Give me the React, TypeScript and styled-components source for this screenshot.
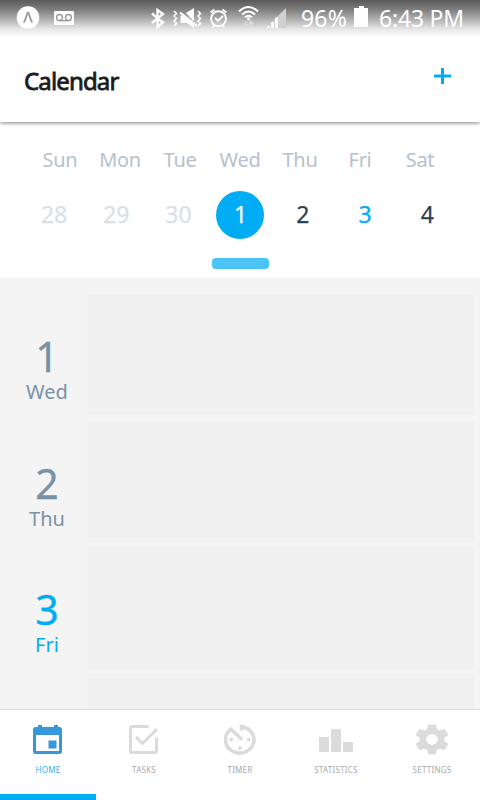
import React from "react";
import styled, { createGlobalStyle } from "styled-components";

const Global = createGlobalStyle`
  * { box-sizing: border-box; }
  html, body { margin: 0; padding: 0; overflow: hidden; background: #fff; }
  body { font-family: "Noto Sans", "Open Sans", sans-serif; }
`;

const Screen = styled.div`
  width: 480px;
  height: 800px;
  display: flex;
  flex-direction: column;
  overflow: hidden;
  background: #f4f4f4;
`;

const Header = styled.header`
  height: 122px;
  flex: none;
  background: #fff;
  box-shadow: 0 1px 4px rgba(0, 0, 0, 0.5);
  z-index: 1;
`;

const StatusBar = styled.div`
  height: 38px;
  display: flex;
  background: linear-gradient(#5a5a5a 0px, #808080 10px, #b4b4b4 20px, #e6e6e6 29px, #fff 37px);
`;

const StatusIcons = styled.svg`
  width: 301px;
  height: 38px;
  flex: none;
`;

const StatusText = styled.span<{ $width: number; $spacing: number }>`
  width: ${(p) => p.$width}px;
  font-size: 23px;
  line-height: 37px;
  letter-spacing: ${(p) => p.$spacing}px;
  color: #fff;
  white-space: nowrap;
`;

const Battery = styled.svg`
  width: 14px;
  height: 38px;
  margin-right: 11px;
  flex: none;
`;

const TitleRow = styled.div`
  height: 84px;
  display: flex;
  justify-content: space-between;
  padding: 0 29px 0 24px;
`;

const Title = styled.h1`
  margin: 0;
  padding-top: 25px;
  font-size: 24px;
  line-height: 36px;
  font-weight: 400;
  letter-spacing: -0.85px;
  color: #1b1b1b;
  -webkit-text-stroke: 0.8px #1b1b1b;
`;

const AddButton = styled.button`
  width: 17px;
  height: 17px;
  margin: 30px 0 0;
  padding: 0;
  border: 0;
  background: none;
  svg { display: block; }
`;

const WeekPanel = styled.section`
  height: 156px;
  flex: none;
  background: #fff;
  display: flex;
  flex-direction: column;
`;

const WeekDays = styled.div`
  display: grid;
  grid-template-columns: repeat(7, 60px);
  padding: 24px 30px 0;
`;

const WeekDay = styled.span`
  font-size: 20px;
  line-height: 28px;
  letter-spacing: -0.3px;
  text-align: center;
  color: #b6c1cd;
`;

const Dates = styled.div`
  display: grid;
  grid-template-columns: repeat(7, 62.2px);
  padding: 17px 22.5px 0;
  justify-items: center;
`;

const DateCell = styled.span<{ $color: string; $selected?: boolean }>`
  width: 48px;
  height: 48px;
  border-radius: 24px;
  background: ${(p) => (p.$selected ? "#00adf5" : "transparent")};
  color: ${(p) => p.$color};
  font-size: 23px;
  line-height: 47px;
  text-align: center;
  text-indent: 1px;
  -webkit-text-stroke: 0.25px ${(p) => p.$color};
`;

const Knob = styled.div`
  width: 57px;
  height: 11px;
  margin: 19px 0 0 212px;
  border-radius: 4px;
  background: #4ac4f7;
`;

const Agenda = styled.main`
  height: 431px;
  flex: none;
  overflow: hidden;
  display: flex;
  flex-direction: column;
  gap: 5.33px;
  padding-top: 16px;
`;

const AgendaRow = styled.div`
  height: 121.33px;
  flex: none;
  display: grid;
  grid-template-columns: 88px 386px;
`;

const AgendaDay = styled.div<{ $today?: boolean }>`
  display: flex;
  flex-direction: column;
  align-items: center;
  padding: 36px 0 0 6px;
  color: ${(p) => (p.$today ? "#00adf5" : "#7a92a5")};
`;

const DayNumber = styled.span`
  font-size: 41px;
  line-height: 52px;
  -webkit-text-stroke: 0.35px currentColor;
`;

const DayName = styled.span`
  font-size: 20px;
  line-height: 20px;
`;

const Slot = styled.div`
  background: #f0f0f0;
`;

const TabBar = styled.nav`
  height: 91px;
  flex: none;
  display: grid;
  grid-template-columns: repeat(5, 96px);
  background: #fff;
  border-top: 1px solid #dedede;
`;

const Tab = styled.div<{ $active?: boolean }>`
  display: flex;
  flex-direction: column;
  align-items: center;
  padding-top: 12px;
  color: ${(p) => (p.$active ? "#3498db" : "#dbdbdb")};
  border-bottom: 6px solid ${(p) => (p.$active ? "#00adf5" : "transparent")};
`;

const TabIcon = styled.svg`
  width: 36px;
  height: 36px;
`;

const TabLabel = styled.span<{ $active?: boolean }>`
  margin-top: 6px;
  font-size: 8px;
  line-height: 12px;
  letter-spacing: 0.25px;
  color: ${(p) => (p.$active ? "#1eb1f3" : "#a9a9a9")};
`;

const weekDays = ["Sun", "Mon", "Tue", "Wed", "Thu", "Fri", "Sat"];

const dates = [
  { day: 28, color: "#d9e1e8" },
  { day: 29, color: "#d9e1e8" },
  { day: 30, color: "#d9e1e8" },
  { day: 1, color: "#ffffff", selected: true },
  { day: 2, color: "#2d4150" },
  { day: 3, color: "#00adf5" },
  { day: 4, color: "#2d4150" },
];

const agenda = [
  { day: "1", name: "Wed" },
  { day: "2", name: "Thu" },
  { day: "3", name: "Fri", today: true },
  { day: "", name: "" },
];

/* Tab drawings share a 36x36 box */
const tabs = [
  {
    label: "HOME",
    active: true,
    icon: (
      <path
        fillRule="evenodd"
        fill="currentColor"
        d="M8 3h4v2h12V3h4v2h1.500a2.500 2.500 0 0 1 2.500 2.500v22a2.500 2.500 0 0 1-2.500 2.500h-24A2.500 2.500 0 0 1 3 29.500v-22A2.500 2.500 0 0 1 5.500 5H8zM6 13v16h23V13zM18.500 18.500h8v8h-8z"
      />
    ),
  },
  {
    label: "TASKS",
    icon: (
      <g fill="none" stroke="currentColor" strokeWidth="3">
        <path d="M22.500 4.500H6A1.500 1.500 0 0 0 4.500 6v23A1.500 1.500 0 0 0 6 30.500h23a1.500 1.500 0 0 0 1.500-1.500V15.500" />
        <path d="M10 15l6.500 6.500L31 7" />
      </g>
    ),
  },
  {
    label: "TIMER",
    icon: (
      <>
        <path
          d="M19.500 8.500V4.600A14.200 13.300 0 1 1 9 7.300L20 17.500"
          fill="none"
          stroke="currentColor"
          strokeWidth="3.600"
        />
        <g fill="currentColor">
          <circle cx="9.200" cy="17.500" r="1.900" />
          <circle cx="26.800" cy="17.500" r="1.900" />
          <circle cx="18" cy="26" r="1.900" />
        </g>
      </>
    ),
  },
  {
    label: "STATISTICS",
    icon: <path fill="currentColor" d="M1 15h10v15H1zM13 7.300h10V30H13zM25 20h10v10H25z" />,
  },
  {
    label: "SETTINGS",
    icon: (
      <path
        fill="currentColor"
        fillRule="evenodd"
        transform="translate(-1.800 -0.600) scale(1.650 1.510)"
        d="M19.430 12.980c.04-.32.07-.64.07-.98s-.03-.66-.07-.98l2.110-1.650c.19-.15.24-.42.12-.64l-2-3.460c-.12-.22-.39-.3-.61-.22l-2.490 1c-.52-.4-1.080-.73-1.690-.98l-.38-2.650C14.460 2.180 14.250 2 14 2h-4c-.25 0-.46.18-.49.420l-.38 2.650c-.61.25-1.170.59-1.690.98l-2.490-1c-.23-.09-.49 0-.61.22l-2 3.460c-.13.22-.07.49.12.64l2.110 1.650c-.04.32-.07.65-.07.98s.03.66.07.98l-2.110 1.650c-.19.15-.24.42-.12.64l2 3.460c.12.22.39.3.61.22l2.490-1c.52.4 1.080.73 1.690.98l.38 2.650c.03.24.24.42.49.42h4c.25 0 .46-.18.49-.42l.38-2.650c.61-.25 1.170-.59 1.690-.98l2.490 1c.23.09.49 0 .61-.22l2-3.460c.12-.22.07-.49-.12-.64l-2.110-1.650zM12 15.500c-1.930 0-3.500-1.570-3.500-3.500s1.570-3.500 3.500-3.500 3.500 1.570 3.500 3.500-1.570 3.500-3.500 3.500z"
      />
    ),
  },
];

export default function App() {
  return (
    <>
      <Global />
      <Screen>
        <Header>
          <StatusBar>
            <StatusIcons viewBox="0 0 301 38" fill="none" stroke="#fff">
              {/* app badge */}
              <circle cx="28" cy="17.500" r="11.300" fill="#fff" stroke="none" />
              <path d="M23.800 22.500c2-3 2.700-7 3.700-9.500h1c1 2.500 1.700 6.500 3.700 9.500" stroke="#999" strokeWidth="1.800" />
              {/* voicemail */}
              <rect x="54" y="11" width="20" height="14" rx="1" fill="#fff" stroke="none" />
              <g stroke="#999" strokeWidth="1.300">
                <circle cx="59.500" cy="17.500" r="3" />
                <circle cx="68.500" cy="17.500" r="3" />
                <path d="M59.500 20.700h9" />
              </g>
              {/* bluetooth */}
              <path d="M152 13.500l11 9-5.500 4.500V10l5.500 4-11 9" strokeWidth="2.300" />
              {/* muted with vibration */}
              <path d="M186 13l8-5v13.500zM180.500 15.500h2L194 25v3l-7-5h-6.500z" fill="#fff" stroke="none" />
              <path d="M180 12.500l17 13.500" strokeWidth="2" />
              <path d="M174 11l2.500 2.500-2.500 2.500 2.500 2.500-2.500 2.500 2.500 2.500-2.500 2.500M198 11l2.500 2.500-2.500 2.500 2.500 2.500-2.500 2.500 2.500 2.500-2.500 2.500" strokeWidth="1.500" />
              {/* alarm */}
              <circle cx="218.500" cy="18.800" r="7.500" strokeWidth="1.900" />
              <path d="M215 18l3 3 5-5M210.500 12.500l4-3M226.500 12.500l-4-3M214 25l-1 2.500M223 25l1 2.500" strokeWidth="1.800" />
              {/* wifi and transfer arrows */}
              <path d="M239 11.500q9.500-9 19 0M242 14.500q6.500-6 13 0M245 17.300q3.500-3 7 0" strokeWidth="2.100" />
              <circle cx="248.500" cy="19" r="1.400" fill="#fff" stroke="none" />
              <path d="M246 21v5m-2-2l2 2.500 2-2.500M251 27v-5m-2 2l2-2.500 2 2.500" stroke="#dadada" strokeWidth="1.600" />
              {/* signal */}
              <path d="M266 28l20-20v20z" fill="#d0d0d0" stroke="none" />
              <path d="M268.500 28v-2M272.500 28v-6M276.500 28V17.500" strokeWidth="2.500" />
            </StatusIcons>
            <StatusText $width={53} $spacing={0.2}>96%</StatusText>
            <Battery viewBox="0 0 14 38">
              <path d="M0 8h5V6h5v2h4v19H0z" fill="#fff" />
            </Battery>
            <StatusText $width={90} $spacing={-0.2}>6:43 PM</StatusText>
          </StatusBar>
          <TitleRow>
            <Title>Calendar</Title>
            <AddButton aria-label="Add">
              <svg width="17" height="17" viewBox="0 0 17 17">
                <path d="M0 8h17M8.500 0v16" stroke="#00adf5" strokeWidth="3" />
              </svg>
            </AddButton>
          </TitleRow>
        </Header>
        <WeekPanel>
          <WeekDays>
            {weekDays.map((d) => (
              <WeekDay key={d}>{d}</WeekDay>
            ))}
          </WeekDays>
          <Dates>
            {dates.map((d) => (
              <DateCell key={d.day} $color={d.color} $selected={d.selected}>
                {d.day}
              </DateCell>
            ))}
          </Dates>
          <Knob />
        </WeekPanel>
        <Agenda>
          {agenda.map((a) => (
            <AgendaRow key={a.day}>
              <AgendaDay $today={a.today}>
                <DayNumber>{a.day}</DayNumber>
                <DayName>{a.name}</DayName>
              </AgendaDay>
              <Slot />
            </AgendaRow>
          ))}
        </Agenda>
        <TabBar>
          {tabs.map((t) => (
            <Tab key={t.label} $active={t.active}>
              <TabIcon viewBox="0 0 36 36">{t.icon}</TabIcon>
              <TabLabel $active={t.active}>{t.label}</TabLabel>
            </Tab>
          ))}
        </TabBar>
      </Screen>
    </>
  );
}
